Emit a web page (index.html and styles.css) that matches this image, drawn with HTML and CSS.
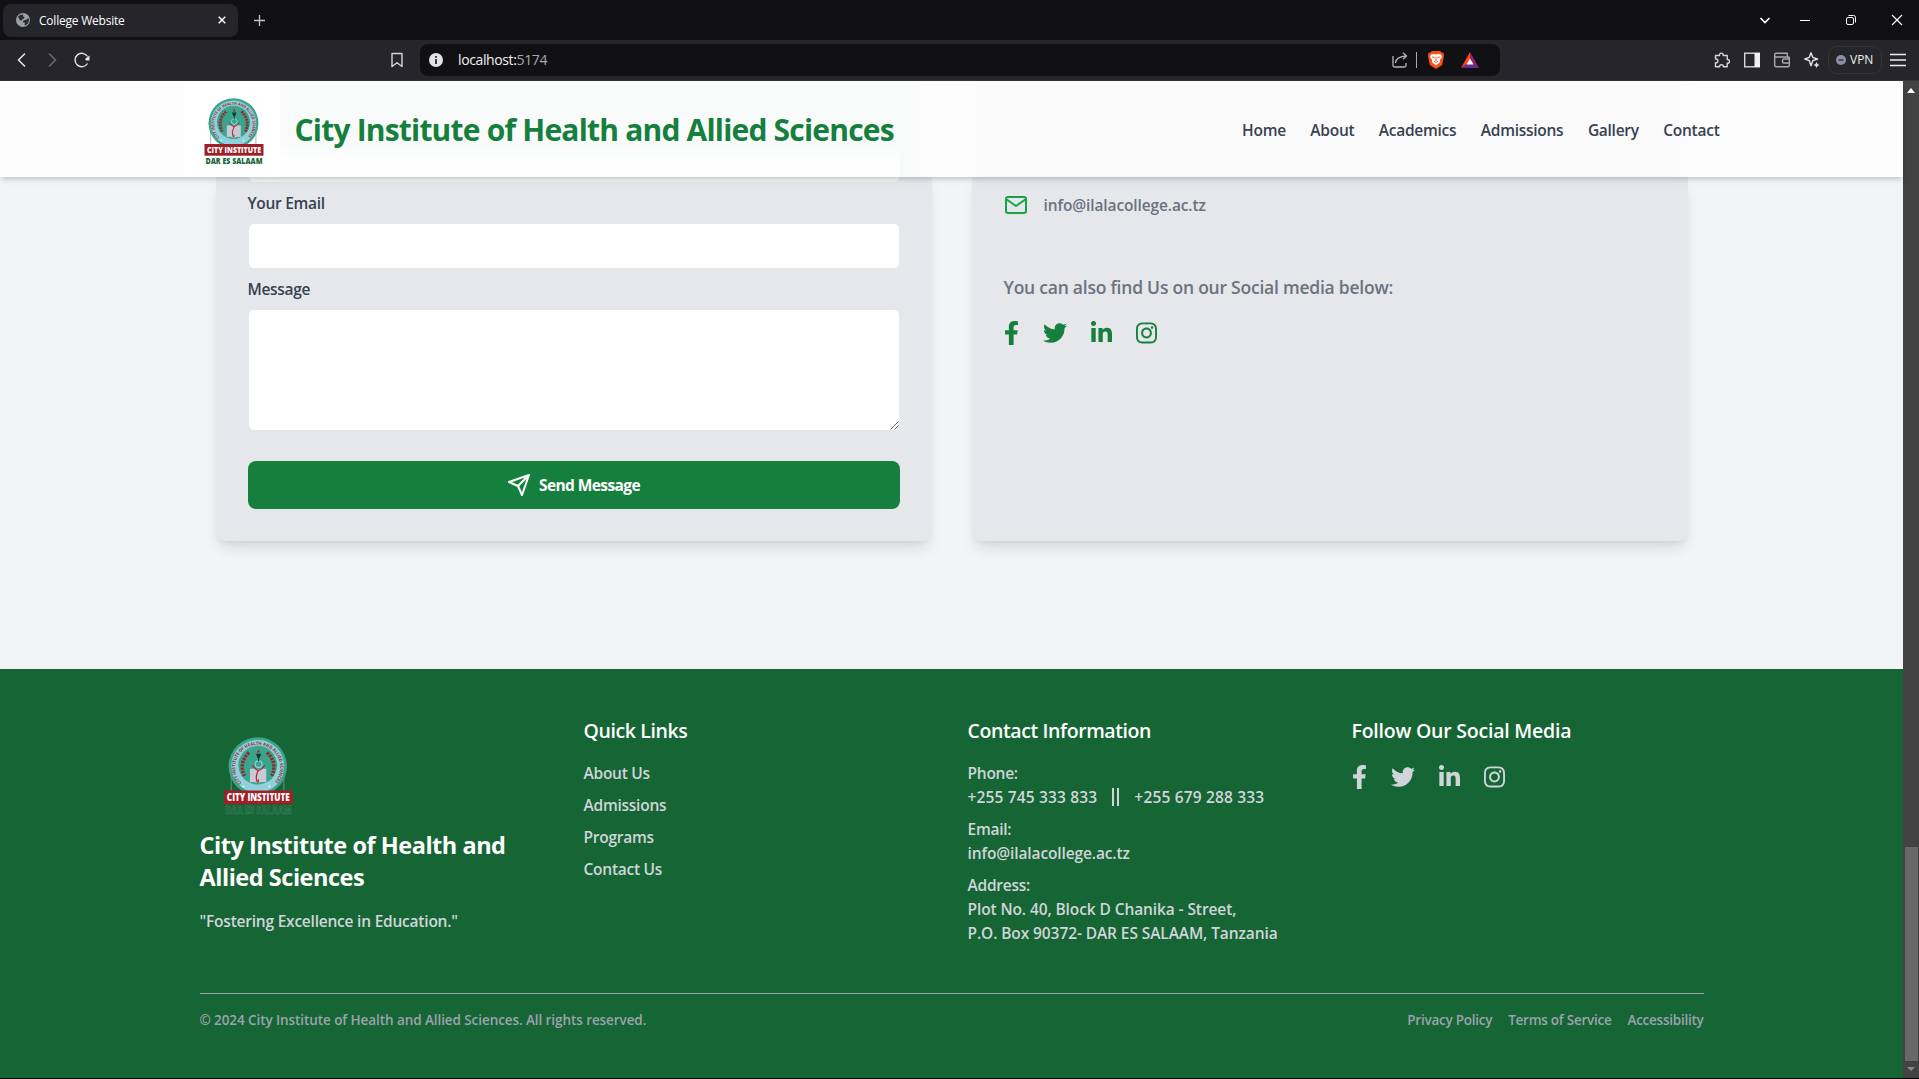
FILE: index.html
```html
<!DOCTYPE html>
<html lang="en">
<head>
<meta charset="utf-8">
<title>College Website</title>
<link rel="stylesheet" href="styles.css">
</head>
<body>
<svg width="0" height="0" class="defs">
  <symbol id="fb" viewBox="0 0 320 512"><path d="M279.14 288l14.22-92.66h-88.91v-60.13c0-25.35 12.42-50.06 52.24-50.06h40.42V6.26S260.43 0 225.36 0c-73.22 0-121.08 44.38-121.08 124.72v70.62H22.89V288h81.39v224h100.17V288z"/></symbol>
  <symbol id="tw" viewBox="0 0 512 512"><path d="M459.37 151.716c.325 4.548.325 9.097.325 13.645 0 138.72-105.583 298.558-298.558 298.558-59.452 0-114.68-17.219-161.137-47.106 8.447.974 16.568 1.299 25.34 1.299 49.055 0 94.213-16.568 130.274-44.832-46.132-.975-84.792-31.188-98.112-72.772 6.498.974 12.995 1.624 19.818 1.624 9.421 0 18.843-1.3 27.614-3.573-48.081-9.747-84.143-51.98-84.143-102.985v-1.299c13.969 7.797 30.214 12.67 47.431 13.319-28.264-18.843-46.781-51.005-46.781-87.391 0-19.492 5.197-37.36 14.294-52.954 51.655 63.675 129.3 105.258 216.365 109.807-1.624-7.797-2.599-15.918-2.599-24.04 0-57.828 46.782-104.934 104.934-104.934 30.213 0 57.502 12.67 76.67 33.137 23.715-4.548 46.456-13.32 66.599-25.34-7.798 24.366-24.366 44.833-46.132 57.827 21.117-2.273 41.584-8.122 60.426-16.243-14.292 20.791-32.161 39.308-52.628 54.253z"/></symbol>
  <symbol id="li" viewBox="0 0 448 512"><path d="M100.28 448H7.4V148.9h92.88zM53.79 108.1C24.09 108.1 0 83.5 0 53.8a53.79 53.79 0 0 1 107.58 0c0 29.7-24.1 54.3-53.79 54.3zM447.9 448h-92.68V302.4c0-34.7-.7-79.2-48.29-79.2-48.29 0-55.69 37.7-55.69 76.7V448h-92.78V148.9h89.08v40.8h1.3c12.4-23.5 42.69-48.3 87.88-48.3 94 0 111.28 61.9 111.28 142.3V448z"/></symbol>
  <symbol id="ig" viewBox="0 0 448 512"><path d="M224.1 141c-63.6 0-114.9 51.3-114.9 114.9s51.3 114.9 114.9 114.9S339 319.5 339 255.9 287.7 141 224.1 141zm0 189.6c-41.1 0-74.7-33.5-74.7-74.7s33.5-74.7 74.7-74.7 74.7 33.5 74.7 74.7-33.6 74.7-74.7 74.7zm146.4-194.3c0 14.9-12 26.8-26.8 26.8-14.9 0-26.8-12-26.8-26.8s12-26.8 26.8-26.8 26.8 12 26.8 26.8zm76.1 27.2c-1.7-35.9-9.9-67.7-36.2-93.9-26.2-26.2-58-34.4-93.9-36.2-37-2.1-147.9-2.1-184.9 0-35.8 1.7-67.6 9.9-93.9 36.1s-34.4 58-36.2 93.9c-2.1 37-2.1 147.9 0 184.9 1.7 35.9 9.9 67.7 36.2 93.9s58 34.4 93.9 36.2c37 2.1 147.9 2.1 184.9 0 35.9-1.7 67.7-9.9 93.9-36.2 26.2-26.2 34.4-58 36.2-93.9 2.1-37 2.1-147.8 0-184.8zM398.8 388c-7.8 19.6-22.9 34.7-42.6 42.6-29.5 11.7-99.5 9-132.1 9s-102.7 2.6-132.1-9c-19.6-7.8-34.7-22.9-42.6-42.6-11.7-29.5-9-99.5-9-132.1s-2.6-102.7 9-132.1c7.8-19.6 22.9-34.7 42.6-42.6 29.5-11.7 99.5-9 132.1-9s102.7-2.6 132.1 9c19.6 7.8 34.7 22.9 42.6 42.6 11.7 29.5 9 99.5 9 132.1s2.7 102.7-9 132.1z"/></symbol>
  <symbol id="crest" viewBox="0 0 96 96">
    <path d="M26.7 46v18M71.9 46v18" stroke="#7b9a9a" stroke-width=".7"/>
    <circle cx="49.5" cy="42.3" r="25" fill="#3aa58c"/>
    <circle cx="49.5" cy="42.3" r="22.7" fill="#8fd0dc"/>
    <circle cx="49.5" cy="41.3" r="16.600" fill="#3aa58c"/>
    <path id="ring" d="M35.500 56.500a19.300 19.300 0 1 1 28 0" fill="none"/>
    <text class="crest-ring" fill="#a3262c"><textPath href="#ring" textLength="88" lengthAdjust="spacingAndGlyphs">CITY INSTITUTE OF HEALTH AND ALLIED SCIENCES</textPath></text>
    <path d="M42 30.500q-9 8.500-4 20M57.500 30.500q9 8.500 4 20" fill="none" stroke="#8f2a30" stroke-width="3" stroke-dasharray="2 .9"/>
    <path d="M42.800 44.500q4-.9 7 .8 3-1.700 7-.8v11.500q-4-.9-7 .8-3-1.700-7-.8z" fill="#c9c9d4"/>
    <circle cx="50.300" cy="40.500" r="2.900" fill="none" stroke="#8fd0dc" stroke-width="1"/>
    <path d="M45 41.500q2 3 5 4.500 3.500-1.500 5.500-4.500M50 46q-3 5-1 9.500 1.500 1.500 1-2" fill="none" stroke="#b0242c" stroke-width="1"/>
    <path d="M48 31.500h4.500l-1.300 3.500h-.5v3h-1v-3h-.5z" fill="#16382c"/>
    <path d="M50.200 27.500l1.300 3h-2.600z" fill="#b0242c"/>
    <circle cx="37.200" cy="59.500" r=".8" fill="#fff"/><circle cx="59.500" cy="59.500" r=".8" fill="#fff"/>
    <rect x="20.500" y="63" width="59" height="11.700" fill="#a01f26"/>
    <text class="crest-text" x="23" y="72" textLength="54" lengthAdjust="spacingAndGlyphs" fill="#fff">CITY INSTITUTE</text>
    <text class="crest-text crest-city" x="21.500" y="83" textLength="57" lengthAdjust="spacingAndGlyphs" fill="#166534">DAR ES SALAAM</text>
  </symbol>
</svg>

<div class="window">
  <div class="tabbar">
    <div class="tab">
      <svg width="14" height="14" viewBox="0 0 14 14"><circle cx="7" cy="7" r="7" fill="#9aa0a6"/><path d="M2 3.500q2-2 5-2-.5 2 1.500 2.500 0 2-2 2 0 1.500-2.500 1.500zM12.500 5l-2.500 2q-3-.5-3 1.500t2 1l-.5 3q4-1 4.500-5z" fill="#2b2b30"/></svg>
      <span class="tab-title">College Website</span>
      <svg width="8" height="8" viewBox="0 0 8 8"><path d="M.7.7l6.600 6.600M7.300.7L.7 7.300" stroke="#fff" stroke-width="1.500"/></svg>
    </div>
    <svg class="newtab" width="11" height="11" viewBox="0 0 11 11"><path d="M5.500 0v11M0 5.500h11" stroke="#c4c5ca" stroke-width="1.300"/></svg>
    <div class="winctl">
      <svg width="12" height="12" viewBox="0 0 12 12"><path d="M1.500 4l4.500 4.500L10.500 4" fill="none" stroke="#fff" stroke-width="1.700"/></svg>
      <svg width="12" height="12" viewBox="0 0 12 12"><path d="M1 6.500h10" stroke="#fff"/></svg>
      <svg width="12" height="12" viewBox="0 0 12 12"><rect x="1.500" y="3.500" width="7" height="7" rx="1.500" fill="none" stroke="#fff"/><path d="M3.500 1.500h5a2 2 0 0 1 2 2v5" fill="none" stroke="#fff"/></svg>
      <svg width="12" height="12" viewBox="0 0 12 12"><path d="M1 1l10 10M11 1L1 11" stroke="#fff" stroke-width="1.100"/></svg>
    </div>
  </div>

  <div class="toolbar">
    <div class="nav-icons">
      <svg width="16" height="16" viewBox="0 0 16 16"><path d="M11 1.500L4.500 8l6.500 6.500" fill="none" stroke="#e8e8ec" stroke-width="1.500"/></svg>
      <svg width="16" height="16" viewBox="0 0 16 16"><path d="M5 1.500L11.500 8 5 14.500" fill="none" stroke="#6c6c74" stroke-width="1.500"/></svg>
      <svg width="16" height="16" viewBox="0 0 16 16"><path d="M13.500 11.500A6.700 6.700 0 1 1 13.500 4.500" fill="none" stroke="#e8e8ec" stroke-width="1.400"/><path d="M15.500 3.500v5h-3.500l-1-1.500z" fill="#e8e8ec"/></svg>
    </div>
    <svg class="bookmark" width="12" height="16" viewBox="0 0 12 16"><path d="M1 1.500h10v13l-5-3.800-5 3.800z" fill="none" stroke="#d5d5da" stroke-width="1.400" stroke-linejoin="round"/></svg>
    <div class="address">
      <svg width="14" height="14" viewBox="0 0 14 14"><circle cx="7" cy="7" r="7" fill="#e4e4e8"/><path d="M7 6v5M7 3v1.700" stroke="#111114" stroke-width="1.600"/></svg>
      <span class="url">localhost:<span>5174</span></span>
      <svg width="16" height="16" viewBox="0 0 16 16"><path d="M1 4v9.500q0 1.500 1.500 1.500h10q1.500 0 1.500-1.500V11M3.500 11q.5-6.500 11-7M11 .8L14.500 4 11 7.200" fill="none" stroke="#b4b4ba" stroke-width="1.300"/></svg>
      <i class="sep"></i>
      <svg class="lion" width="16" height="18" viewBox="0 0 16 18"><path d="M4 0h8l1.500 1.500 2 .5.5 3-1.800 9L8 18l-6.200-4L0 5l.5-3 2-.5z" fill="#fb4f14"/><path d="M3 3.500l3-.5 2 .6 2-.6 3 .5 1 2.500-2.200 3 .4 2L8 14.500 3.800 11l.4-2L2 6z" fill="#fff"/><path d="M4 6l2.500.6M12 6l-2.500.6M8 6v4M6 10.500l2 .9 2-.9" stroke="#fb542b" fill="none"/></svg>
      <svg class="bat" width="18" height="16" viewBox="0 0 18 16"><path d="M9 0L0 16l9-6z" fill="#ff4724"/><path d="M9 0l9 16-9-6z" fill="#9e1f63"/><path d="M0 16h18l-9-6z" fill="#662d91"/><path d="M9 6.500l3.500 6h-7z" fill="#fff"/></svg>
    </div>
    <div class="tools">
      <svg width="16" height="16" viewBox="0 0 16 16"><path d="M1.500 3.500h4a1.900 1.900 0 1 1 3.700 0h4v4a1.900 1.900 0 1 1 0 3.700v3.500H9.500a2 2 0 1 0-4 0h-4v-4a1.900 1.900 0 1 0 0-3.600z" fill="none" stroke="#d5d5da" stroke-width="1.400" stroke-linejoin="round"/></svg>
      <svg width="16" height="16" viewBox="0 0 16 16"><rect x=".7" y="1.200" width="14.600" height="13.600" fill="none" stroke="#d8d8dc" stroke-width="1.400"/><path d="M10.500 1H16v14h-5.500z" fill="#f0f0f3"/></svg>
      <svg width="16" height="16" viewBox="0 0 16 16"><path d="M15.300 5H1.500Q.7 5 .7 3t1.500-1.800h11V5M.7 3v10q0 1.800 1.800 1.800h11q1.800 0 1.800-1.800V5M15.300 7H10q-1.500 0-1.500 2t1.500 2h5.300" fill="none" stroke="#a8a8ae" stroke-width="1.400"/></svg>
      <svg width="16" height="16" viewBox="0 0 16 16"><path d="M7 .8L8.700 5.300 13.500 7 8.700 8.700 7 13.700 5.300 8.700.8 7l4.500-1.700z" fill="none" stroke="#e4e4e8" stroke-width="1.400" stroke-linejoin="round"/><path d="M12.500 10l1 2 2 1-2 1-1 2-1-2-2-1 2-1z" fill="#e4e4e8"/></svg>
      <div class="vpn"><svg width="10" height="10" viewBox="0 0 10 10"><circle cx="5" cy="5" r="5" fill="#8d8fa6"/><path d="M2.500 5h5" stroke="#25252a" stroke-width="1.300"/></svg>VPN</div>
      <svg class="menu" width="16" height="14" viewBox="0 0 16 14"><path d="M0 1.500h16M0 7h16M0 12.500h16" stroke="#f0f0f3" stroke-width="1.400"/></svg>
    </div>
  </div>

  <div class="viewport">
    <div class="page">
      <header class="site-header">
        <div class="header-inner">
          <div class="brand"><svg class="brand-logo"><use href="#crest"/></svg><h1>City Institute of Health and Allied Sciences</h1></div>
          <nav><a>Home</a><a>About</a><a>Academics</a><a>Admissions</a><a>Gallery</a><a>Contact</a></nav>
        </div>
      </header>

      <main class="contact">
        <form class="card form">
          <div class="field name"></div>
          <label>Your Email</label>
          <div class="field"></div>
          <label class="lbl-message">Message</label>
          <div class="field area"><svg width="9" height="9" viewBox="0 0 9 9"><path d="M.5 8.500l8-8M4.500 8.500l4-4" stroke="#555" stroke-width=".9"/></svg></div>
          <button type="button"><svg width="24" height="24" viewBox="0 0 24 24" fill="none" stroke="#fff" stroke-width="2" stroke-linecap="round" stroke-linejoin="round"><path d="M22 2L11 13M22 2l-7 20-4-9-9-4z"/></svg><span>Send Message</span></button>
        </form>
        <section class="card info">
          <div class="mail"><svg width="24" height="24" viewBox="0 0 24 24" fill="none" stroke="#16a34a" stroke-width="2" stroke-linecap="round" stroke-linejoin="round"><path d="M4 4h16c1.100 0 2 .9 2 2v12c0 1.100-.9 2-2 2H4c-1.100 0-2-.9-2-2V6c0-1.100.9-2 2-2z"/><path d="M22 6l-10 7L2 6"/></svg><span class="email">info@ilalacollege.ac.tz</span></div>
          <p>You can also find Us on our Social media below:</p>
          <div class="social green"><svg class="fb"><use href="#fb"/></svg><svg class="tw"><use href="#tw"/></svg><svg class="sq"><use href="#li"/></svg><svg class="sq"><use href="#ig"/></svg></div>
        </section>
      </main>

      <footer>
        <div class="cols">
          <div><svg class="foot-logo"><use href="#crest"/></svg><h2>City Institute of Health and<br>Allied Sciences</h2><p class="motto">"Fostering Excellence in Education."</p></div>
          <div><h3>Quick Links</h3><ul><li>About Us</li><li>Admissions</li><li>Programs</li><li>Contact Us</li></ul></div>
          <div><h3>Contact Information</h3>
            <ul><li>Phone:<br><span class="phones"><span>+255 745 333 833</span><i class="bars"></i><span>+255 679 288 333</span></span></li>
            <li>Email:<br><span class="email">info@ilalacollege.ac.tz</span></li>
            <li>Address:<br><span class="addr">Plot No. 40, Block D Chanika - Street,<br>P.O. Box 90372- DAR ES SALAAM, Tanzania</span></li></ul></div>
          <div><h3 class="follow">Follow Our Social Media</h3>
            <div class="social"><svg class="fb"><use href="#fb"/></svg><svg class="tw"><use href="#tw"/></svg><svg class="sq"><use href="#li"/></svg><svg class="sq"><use href="#ig"/></svg></div></div>
        </div>
        <div class="legal"><span>© 2024 City Institute of Health and Allied Sciences. All rights reserved.</span><div><span>Privacy Policy</span><span>Terms of Service</span><span>Accessibility</span></div></div>
      </footer>
    </div>
    <div class="scrollbar">
      <svg width="8" height="5" viewBox="0 0 8 5"><path d="M0 5l4-5 4 5z" fill="#fff"/></svg>
      <i class="thumb"></i>
      <svg width="8" height="4" viewBox="0 0 8 4"><path d="M0 0l4 4 4-4z" fill="#8a8a8a"/></svg>
    </div>
  </div>
</div>
</body>
</html>
```
FILE: styles.css
```css
* { box-sizing: border-box; margin: 0; padding: 0; }
body { width: 1919px; height: 1079px; overflow: hidden; background: #000; font-family: "Open Sans", "Noto Sans", sans-serif; font-size: 15.5px; line-height: 24px; font-weight: 600; letter-spacing: -.3px; }
svg { display: block; flex: none; }
.defs { position: absolute; }
ul { list-style: none; }
.window { display: flex; flex-direction: column; height: 1078px; }

/* Browser chrome */
.tabbar { height: 40px; background: #111113; display: flex; align-items: center; padding: 0 16px 0 3px; flex: none; }
.tab { width: 235px; height: 33px; background: #25252a; border-radius: 8px; display: flex; align-items: center; padding: 0 12px 0 13px; gap: 9px; color: #fff; font-size: 12px; font-weight: 400; }
.tab-title { flex: 1; letter-spacing: -.22px; padding-top: 1px; }
.newtab { margin-left: 16px; }
.winctl { margin-left: auto; display: flex; gap: 34px; }
.winctl svg:first-child { margin-right: -6px; }
.toolbar { height: 41px; background: #25252a; border-bottom: 1px solid #34303a; display: flex; align-items: center; flex: none; padding-right: 13px; }
.nav-icons { display: flex; gap: 14px; padding-left: 14px; width: 391px; }
.address { margin-left: 17px; width: 1080px; height: 32px; background: #111113; border-radius: 8px; display: flex; align-items: center; padding: 0 21px 0 9px; }
.url { flex: 1; margin-left: 15px; color: #f0f0f2; font-size: 14px; font-weight: 400; letter-spacing: -.38px; }
.url span { color: #a9a9b0; }
.sep { width: 1px; height: 16px; background: #a9a9b0; margin: 0 11px 0 8px; }
.bat { margin-left: 17px; }
.tools { margin-left: auto; display: flex; align-items: center; gap: 14px; }
.vpn { width: 54px; height: 28px; border: 1px solid #34343a; border-radius: 9px; margin: 0 -6px 0 -6px; padding-left: 7px; display: flex; align-items: center; gap: 4px; color: #f0f0f3; font-size: 12px; font-weight: 400; letter-spacing: 0; }

/* Page */
.viewport { flex: 1; min-height: 0; display: flex; }
.page { width: 1903px; background: #f3f4f6; display: flex; flex-direction: column; }
.site-header { height: 96px; flex: none; background: linear-gradient(rgba(255,255,255,0) 66px, #fefefe 76px) 280px 0 / 620px 96px no-repeat, linear-gradient(90deg, #fdfdfd 0 270px, #f9fafa 290px 900px, #fcfcfc 935px 965px, #fafafb 990px 1665px, #fdfdfd 1700px); box-shadow: 0 4px 6px -1px rgba(0,0,0,.14), 0 2px 4px -2px rgba(0,0,0,.12); position: relative; z-index: 1; }
.header-inner { width: 1536px; height: 96px; margin: 0 auto; display: flex; align-items: center; justify-content: space-between; }
.brand { display: flex; align-items: center; gap: 15px; }
.brand-logo { width: 96px; height: 96px; background: #fff; }
h1 { color: #15803d; font-size: 30px; line-height: 36px; font-weight: 700; letter-spacing: -.8px; padding-top: 2px; }
nav { display: flex; gap: 24.5px; color: #374151; letter-spacing: -.27px; padding-top: 1px; }
.contact { width: 1472px; height: 492px; flex: none; margin: 0 auto; display: grid; grid-template-columns: 1fr 1fr; gap: 40px; align-items: start; }
.card { height: 364px; background: #e5e7eb; border-radius: 0 0 8px 8px; box-shadow: 0 10px 15px -3px rgba(0,0,0,.1), 0 4px 6px -4px rgba(0,0,0,.1); padding: 0 32px; }
.form { color: #374151; display: flex; flex-direction: column; }
.field { height: 46px; background: #fff; border: 1px solid #e5e7eb; border-radius: 6px; flex: none; }
.field.name { height: 6px; border-top: 0; border-radius: 0 0 6px 6px; margin-bottom: 8px; background: #f6f6f6; }
label { display: block; margin-bottom: 8px; flex: none; }
.lbl-message { margin-top: 8px; }
.area { height: 122px; display: flex; align-items: flex-end; justify-content: flex-end; }
button { height: 48px; flex: none; margin-top: 30px; border: 0; border-radius: 8px; background: #15803d; color: #fff; font: inherit; font-weight: 700; letter-spacing: -.6px; display: flex; align-items: center; justify-content: center; gap: 8px; }
.info { color: #6b7280; padding-top: 16px; }
.mail { display: flex; gap: 16px; }
.email { letter-spacing: -.12px; }
.info p { margin: 56px 0 20px; font-size: 17.5px; line-height: 28px; letter-spacing: -.23px; }
.social { display: flex; gap: 24px; color: #d1d5db; }
.social svg { height: 24px; fill: currentColor; }
.social.green { color: #15803d; }
svg.fb { width: 15px; }
svg.tw { width: 24px; }
svg.sq { width: 21px; }

footer { flex: 1; background: #166534; padding: 48px 199.5px 0; color: #fff; }
.cols { display: grid; grid-template-columns: repeat(4, 352px); gap: 32px; height: 228px; }
.cols .social { padding-top: 4px; }
.foot-logo { width: 112px; height: 112px; --outline: #4f8a70; }
h2 { font-size: 23.5px; line-height: 32px; font-weight: 700; letter-spacing: -.47px; }
h3 { font-size: 19.5px; line-height: 28px; font-weight: 600; margin-bottom: 16px; letter-spacing: -.4px; }
h3.follow { letter-spacing: -.22px; }
.motto { margin-top: 16px; color: #d1d5db; letter-spacing: -.22px; }
li { color: #d1d5db; margin-bottom: 8px; white-space: nowrap; letter-spacing: -.25px; }
li .email { letter-spacing: -.12px; }
.addr { letter-spacing: -.1px; }
.phones { display: flex; align-items: center; gap: 15px; letter-spacing: .16px; }
.bars { width: 7px; height: 18px; border: solid #d1d5db; border-width: 0 2px; }
.legal { margin-top: 48px; border-top: 1px solid #9ca3af; padding-top: 16px; display: flex; justify-content: space-between; font-size: 13.5px; line-height: 20px; color: #9ca3af; letter-spacing: -.08px; }
.legal div { display: flex; gap: 16px; letter-spacing: -.25px; }

.scrollbar { width: 16px; background: #424242; display: flex; flex-direction: column; align-items: center; padding: 7px 0; }
.thumb { width: 13px; height: 214px; background: #686868; margin: auto 0 6px; }

.crest-ring { font: 700 4px "Open Sans", sans-serif; letter-spacing: 0; }
.crest-text { font: 800 8.5px "Open Sans", sans-serif; letter-spacing: 0; }
.crest-city { stroke: var(--outline, none); stroke-width: .35px; }
```
